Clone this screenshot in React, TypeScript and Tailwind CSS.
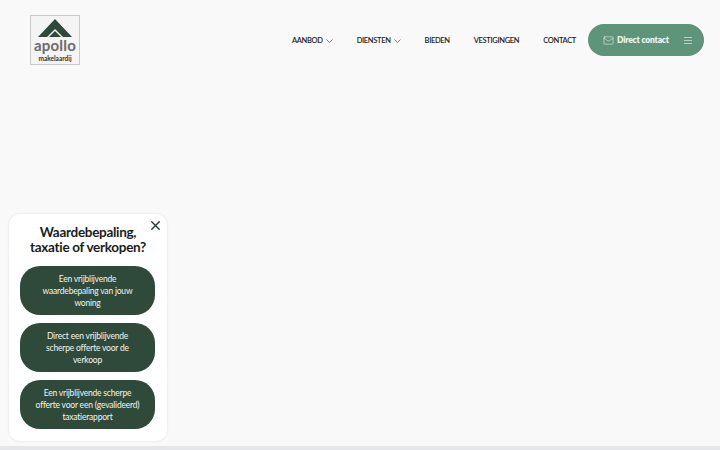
import { Mail, X } from 'lucide-react'

const font = { fontFamily: 'Lato, "Noto Sans", sans-serif' }

const navItems = [
  { name: 'AANBOD', caret: true },
  { name: 'DIENSTEN', caret: true },
  { name: 'BIEDEN', caret: false },
  { name: 'VESTIGINGEN', caret: false },
  { name: 'CONTACT', caret: false },
]

const choices = [
  'Een vrijblijvende waardebepaling van jouw woning',
  'Direct een vrijblijvende scherpe offerte voor de verkoop',
  'Een vrijblijvende scherpe offerte voor een (gevalideerd) taxatierapport',
]

const Logo = () => (
  <div className="flex h-[50px] w-[50px] flex-col items-center border border-[#c9c9c9] bg-[#f4f4f4]">
    <svg viewBox="0 0 34 18" className="mt-[3px] h-[18px] w-[34px]">
      <path d="M17 0 L34 18 L25 18 L17 10 L9 18 L0 18 Z" fill="#2f4a3a" />
      <path d="M17 12 L23 18 L11 18 Z" fill="#2f4a3a" />
    </svg>
    <span className="text-[15px] font-bold leading-[17px] tracking-[0.2px] text-[#6b6b6b]">apollo</span>
    <span className="text-[6.5px] font-bold leading-[9px] text-[#333]">makelaardij</span>
  </div>
)

export default function App() {
  return (
    <div className="relative flex h-[450px] w-[720px] flex-col overflow-hidden bg-[#f9f9f9]" style={font}>
      <header className="flex items-center justify-between pl-[30px] pr-4 pt-[15px]">
        <Logo />
        <div className="flex items-center gap-3">
          <nav className="flex items-center gap-6 pt-[1px]">
            {navItems.map(({ name, caret }) => (
              <a key={name} className="flex items-center gap-[3px] text-[7.5px] font-semibold tracking-[-0.33px] text-[#222]">
                {name}
                {caret && (
                  <svg viewBox="0 0 7 4" className="h-[4px] w-[7px] text-[#444]">
                    <path d="M0.5 0.5 L3.5 3.5 L6.5 0.5" fill="none" stroke="currentColor" strokeWidth="0.7" />
                  </svg>
                )}
              </a>
            ))}
          </nav>
          <div className="flex h-8 w-[116px] items-center rounded-full bg-[#5e9479] pl-[15px] pr-3 text-[#eef4f0]">
            <Mail className="h-[11px] w-[11px]" strokeWidth={1.25} />
            <span className="ml-[3px] text-[8.5px] font-extrabold tracking-[-0.2px]">Direct contact</span>
            <svg viewBox="0 0 8 7" className="ml-auto h-[7px] w-[8px] text-[#dfeae4]">
              <path d="M0 0.5 H8 M0 3.5 H8 M0 6.5 H8" stroke="currentColor" strokeWidth="0.7" />
            </svg>
          </div>
        </div>
      </header>

      <div className="mt-auto h-1 bg-[#e3e7ea]" />

      <aside className="absolute left-2 top-[213px] flex h-[229px] w-[160px] flex-col items-center rounded-xl border border-[#f0f0f0] bg-white px-[11px] pt-[11px] shadow-[0_0_2px_rgba(0,0,0,0.04)]">
        <button className="absolute right-[4px] top-[4px] text-[#2a3a33]">
          <X className="h-[15px] w-[15px]" strokeWidth={2.25} />
        </button>
        <h2 className="text-center text-[13.5px] font-bold leading-[15px] tracking-[-0.3px] text-[#1c1c1c]">
          Waardebepaling,
          <br />
          taxatie of verkopen?
        </h2>
        <div className="mt-[11px] flex w-full flex-col gap-2">
          {choices.map((text) => (
            <button
              key={text}
              className="flex h-[49px] w-[135px] items-center justify-center rounded-[20px] bg-[#2f4a3a] px-3 text-center text-[8.5px] leading-3 tracking-[-0.2px] text-[#f2f5f3]"
            >
              {text}
            </button>
          ))}
        </div>
      </aside>
    </div>
  )
}
